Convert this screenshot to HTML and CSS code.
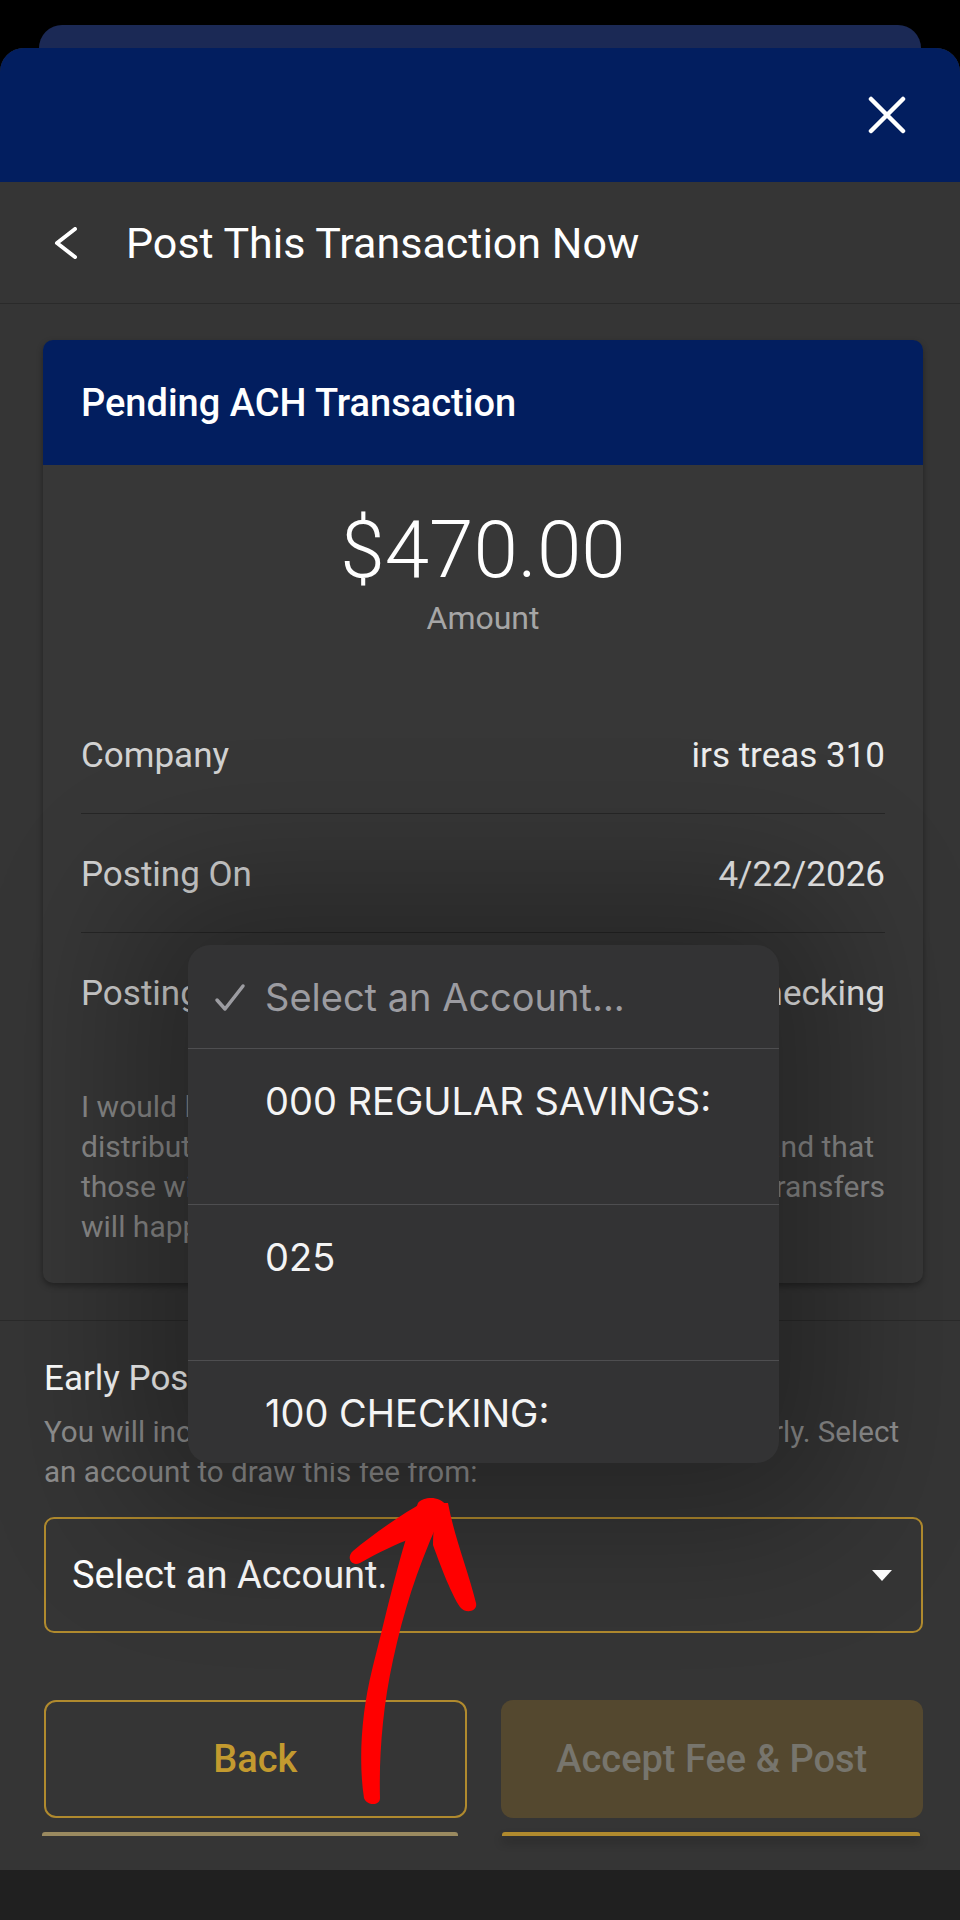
FILE: index.html
```html
<!DOCTYPE html>
<html lang="en-US">
  <head>
    <meta charset="UTF-8" />
    <title>Post This Transaction Now</title>
    <link rel="stylesheet" href="styles.css">
  </head>
  <body>
    <div class="back-sheet"></div>
    <div class="sheet">
      <header class="topbar">
        <button class="close" aria-label="Close">
          <svg width="38" height="38" viewBox="0 0 38 38">
            <path d="M3 3 L35 35 M35 3 L3 35" stroke="#fff" stroke-width="4.5" stroke-linecap="round" fill="none" />
          </svg>
        </button>
      </header>

      <div class="titlebar">
        <svg class="chevron" width="24" height="32" viewBox="0 0 24 32">
          <path d="M21 2 L3 16 L21 30" stroke="#fff" stroke-width="4" stroke-linecap="round" stroke-linejoin="round" fill="none" />
        </svg>
        <h1>Post This Transaction Now</h1>
      </div>

      <main class="content">
        <section class="card">
          <div class="card-head">Pending ACH Transaction</div>
          <div class="card-body">
            <div class="amount">
              <div class="amount-value">$470.00</div>
              <div class="amount-label">Amount</div>
            </div>
            <div class="row">
              <span class="label">Company</span>
              <span class="value">irs treas 310</span>
            </div>
            <div class="row">
              <span class="label">Posting On</span>
              <span class="value">4/22/2026</span>
            </div>
            <div class="row last">
              <span class="label">Posting From</span>
              <span class="value">100 Checking</span>
            </div>
            <p class="note">
              I would like to post this transaction now. I know that<br>
              distributions on this transaction will also post early and that<br>
              those will be credited to my account, while pending transfers<br>
              will happen on the next business day.
            </p>
          </div>
        </section>
      </main>

      <footer class="panel">
        <h2>Early Posting Fee</h2>
        <p>You will incur a $5.00 fee for posting this transaction early. Select<br>an account to draw this fee from:</p>
        <div class="select">
          <span>Select an Account.</span>
          <span class="caret"></span>
        </div>
        <div class="actions">
          <button class="btn btn-outline">Back</button>
          <button class="btn btn-fill">Accept Fee &amp; Post</button>
        </div>
        <div class="ghost-row">
          <span class="ghost pale"></span>
          <span class="ghost"></span>
        </div>
      </footer>
    </div>
    <div class="bottom-strip"></div>

    <!-- native account picker, open over the page -->
    <div class="picker">
      <div class="opt current">
        <svg class="check" width="32" height="30" viewBox="0 0 32 30">
          <path d="M3 17 L11 26 L29 3" stroke="#9c9ca1" stroke-width="3.5" stroke-linecap="round" stroke-linejoin="round" fill="none" />
        </svg>
        Select an Account...
      </div>
      <div class="opt">000 REGULAR SAVINGS:</div>
      <div class="opt">025</div>
      <div class="opt">100 CHECKING:</div>
    </div>

    <svg class="annotation" width="960" height="1920" viewBox="0 0 960 1920">
      <path fill="#ff0000" d="M418 1503 C400 1550 385 1620 372 1670 C362 1710 358 1760 364 1798 C367 1806 380 1806 380 1798 C379 1760 382 1710 393 1660 C405 1605 420 1560 446 1505 C440 1496 424 1496 418 1503 Z" />
      <path fill="#ff0000" d="M429 1499 C400 1515 372 1535 353 1551 C346 1557 351 1567 360 1563 C378 1553 397 1543 414 1538 Z" />
      <path fill="#ff0000" d="M436 1503 C434 1525 433 1535 433 1545 C442 1570 452 1595 460 1607 C465 1614 478 1612 476 1603 C468 1570 455 1540 448 1503 Z" />
    </svg>
  </body>
</html>
```

FILE: styles.css
```css
* {
  box-sizing: border-box;
}

body {
  margin: 0;
  background-color: #000;
  font-family: Roboto, "Liberation Sans", sans-serif;
  color: #fff;
  position: relative;
}

button {
  font-family: inherit;
  border: none;
  background: none;
  padding: 0;
}

.back-sheet {
  height: 23px;
  margin: 25px 39px 0;
  background: #1b2955;
  border-radius: 24px 24px 0 0;
}

.sheet {
  background: #353535;
  border-radius: 24px 24px 0 0;
  overflow: hidden;
}

.topbar {
  height: 134px;
  background: #021e5f;
  display: flex;
  justify-content: flex-end;
  align-items: center;
  padding-right: 54px;
}

.close {
  display: flex;
}

.titlebar {
  height: 122px;
  display: flex;
  align-items: center;
  gap: 48px;
  padding-left: 54px;
  border-bottom: 1px solid #2a2a2a;
}

.titlebar h1 {
  margin: 0;
  font-size: 43px;
  font-weight: 400;
  line-height: 48px;
}

.content {
  padding: 36px 37px 37px 43px;
}

.card {
  background: #373737;
  border-radius: 10px;
  overflow: hidden;
  box-shadow: 0 3px 6px rgba(0, 0, 0, 0.35);
}

.card-head {
  height: 125px;
  background: #021e5f;
  display: flex;
  align-items: center;
  padding-left: 38px;
  font-size: 38px;
  font-weight: 500;
}

.card-body {
  padding: 37px 38px 36px;
}

.amount {
  text-align: center;
  margin-bottom: 57px;
}

.amount-value {
  font-size: 80px;
  font-weight: 300;
  line-height: 96px;
}

.amount-label {
  font-size: 32px;
  line-height: 40px;
  color: #a6a6a6;
}

.row {
  display: flex;
  justify-content: space-between;
  padding: 39px 0 35px;
  font-size: 35px;
  line-height: 44px;
  border-bottom: 1px solid #262626;
}

.row.last {
  border-bottom: none;
}

.label {
  color: #d2d2d2;
}

.value {
  color: #ededed;
}

.note {
  margin: 36px 0 0;
  font-size: 30px;
  line-height: 40px;
  color: #8a8a8a;
  white-space: nowrap;
}

.panel {
  border-top: 1px solid #2a2a2a;
  padding: 38px 37px 34px 44px;
}

.panel h2 {
  margin: 0;
  font-size: 35px;
  font-weight: 400;
  line-height: 40px;
}

.panel p {
  margin: 13px 0 0;
  font-size: 29.6px;
  line-height: 40px;
  color: #8e8e8e;
  white-space: nowrap;
}

.select {
  margin-top: 25px;
  height: 116px;
  border: 2px solid #b08a2e;
  border-radius: 10px;
  display: flex;
  align-items: center;
  justify-content: space-between;
  padding: 0 29px 0 26px;
  font-size: 38px;
}

.caret {
  width: 0;
  height: 0;
  border-left: 10px solid transparent;
  border-right: 10px solid transparent;
  border-top: 11px solid #fff;
}

.actions {
  margin-top: 67px;
  display: grid;
  grid-template-columns: 1fr 1fr;
  gap: 34px;
}

.btn {
  height: 118px;
  border-radius: 12px;
  font-size: 38px;
  font-weight: 500;
}

.btn-outline {
  border: 2px solid #b08a2e;
  color: #c39a2f;
}

.btn-fill {
  background: #54482f;
  color: #77756d;
}

.ghost-row {
  margin-top: 14px;
  display: grid;
  grid-template-columns: 1fr 1fr;
  gap: 34px;
}

.ghost {
  height: 4px;
  border-radius: 3px 3px 0 0;
  background: #b08a2e;
  margin: 0 3px 0 1px;
  box-shadow: 0 6px 10px rgba(0, 0, 0, 0.3);
}

.ghost.pale {
  background: #9a8a60;
  margin: 0 9px 0 -2px;
  box-shadow: none;
}

.bottom-strip {
  height: 50px;
  background: #202020;
}

.picker {
  position: absolute;
  top: 945px;
  left: 188px;
  width: 591px;
  height: 518px;
  background: #333334;
  border-radius: 22px;
  overflow: hidden;
  box-shadow: 0 0 140px 60px rgba(0, 0, 0, 0.3);
  font-family: Inter, "Noto Sans", sans-serif;
  font-size: 38px;
  line-height: 40px;
  color: #f4f4f4;
}

.opt {
  position: relative;
  height: 156px;
  padding: 32px 0 0 77px;
  border-top: 1px solid #4e4e50;
}

.opt.current {
  height: 103px;
  border-top: none;
  color: #9c9ca1;
}

.check {
  position: absolute;
  left: 26px;
  top: 38px;
}

.annotation {
  position: absolute;
  top: 0;
  left: 0;
  pointer-events: none;
}
```
